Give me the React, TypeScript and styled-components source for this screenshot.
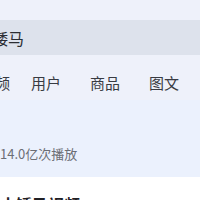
import styled, { createGlobalStyle } from "styled-components";

const GlobalStyle = createGlobalStyle`
  *, *::before, *::after {
    box-sizing: border-box;
  }
  body {
    margin: 0;
    background: #ffffff;
    font-family: "Noto Sans CJK SC", "Noto Sans", sans-serif;
  }
`;

const tabs = ["视频", "用户", "商品", "图文"];

export default function App() {
  return (
    <Page>
      <GlobalStyle />
      <Header>
        <SearchBar>
          <SearchText>矮马</SearchText>
        </SearchBar>
        <TabRow>
          {tabs.map((t) => (
            <Tab key={t}>{t}</Tab>
          ))}
        </TabRow>
      </Header>
      <TopicCard>
        <Stats>14.0亿次播放</Stats>
      </TopicCard>
      <Results>
        <ResultTitle>小矮马视频</ResultTitle>
      </Results>
    </Page>
  );
}

const Page = styled.div`
  width: 200px;
  height: 200px;
  overflow: hidden;
  background: #ffffff;
`;

const Header = styled.header`
  background: #eef1fa;
  height: 100px;
  padding-top: 20px;
`;

const SearchBar = styled.div`
  margin: 0 -40px 0 -20px;
  height: 35px;
  background: #dde2ec;
  display: flex;
  align-items: center;
  padding-left: 12px;
`;

const SearchText = styled.span`
  font-size: 16px;
  color: #2b2d33;
  line-height: 1;
`;

const TabRow = styled.nav`
  display: grid;
  grid-template-columns: 51px 59px 59px 59px;
  margin: 17px 0 0 -20px;
  height: 22px;
  align-items: center;
`;

const Tab = styled.span`
  font-size: 15px;
  line-height: 22px;
  color: #383b42;
  white-space: nowrap;
`;

const TopicCard = styled.section`
  background: #ebf1fd;
  height: 77px;
  padding-top: 45px;
`;

const Stats = styled.div`
  font-size: 13px;
  line-height: 18px;
  color: #6b6e75;
`;

const Results = styled.section`
  padding-top: 17px;
`;

const ResultTitle = styled.h3`
  margin: 0;
  font-size: 16px;
  font-weight: 700;
  color: #1f2024;
  line-height: 20px;
  white-space: nowrap;
`;
